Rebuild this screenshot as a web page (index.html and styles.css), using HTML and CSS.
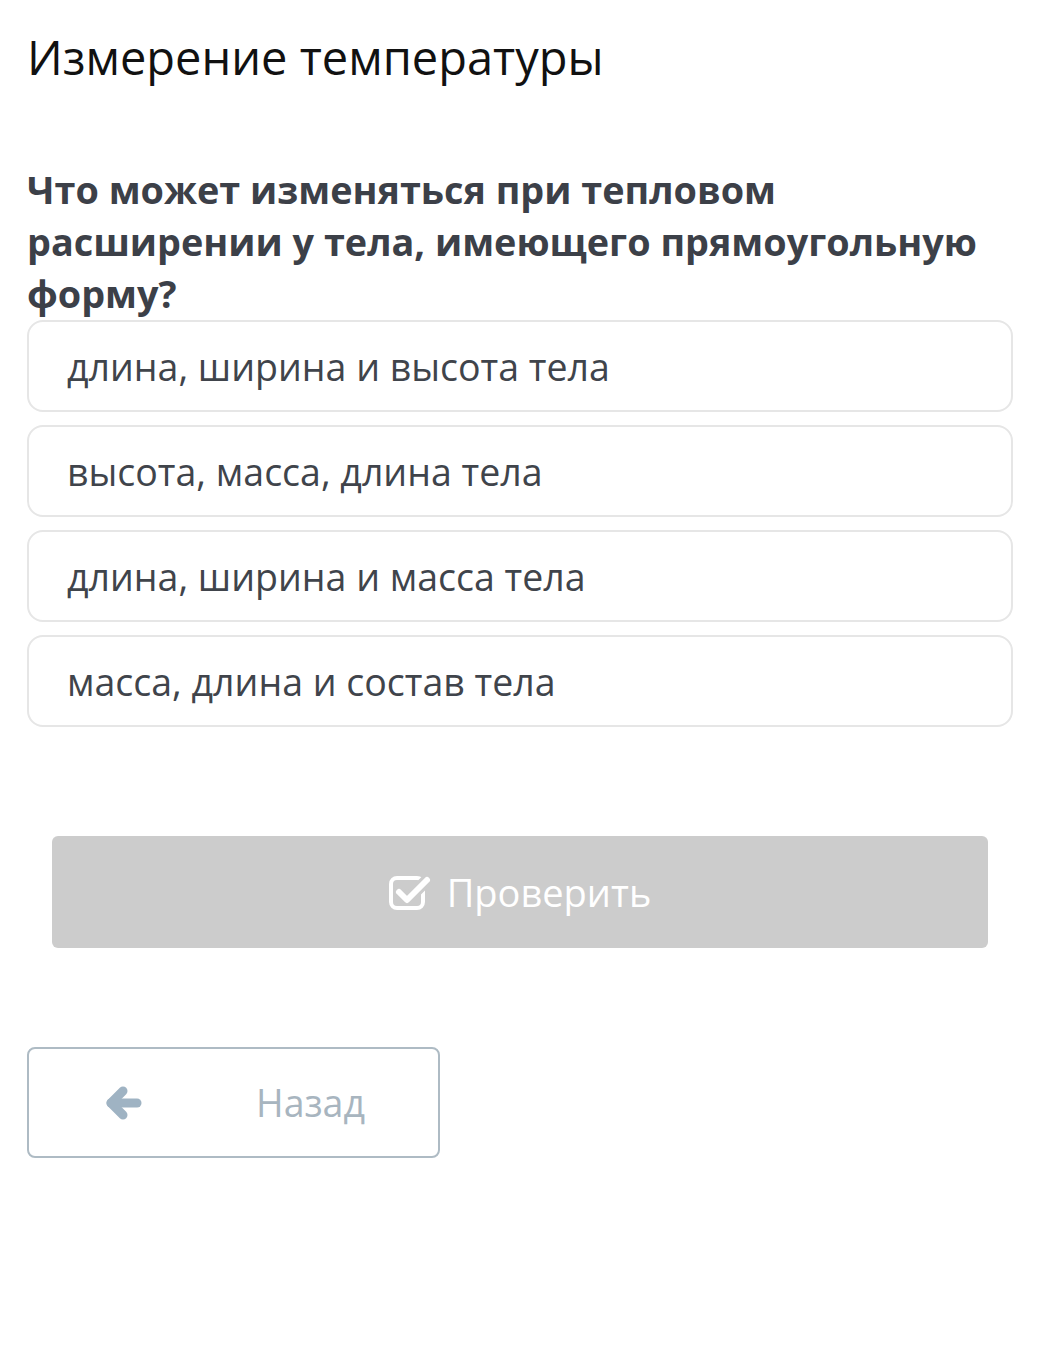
FILE: index.html
```html
<!DOCTYPE html>
<html lang="ru">
  <head>
    <meta charset="UTF-8" />
    <title>Измерение температуры</title>
    <link rel="stylesheet" href="styles.css">
  </head>
  <body>
    <div class="page">
      <h1 class="title">Измерение температуры</h1>

      <div class="question">
        Что может изменяться при тепловом расширении у тела, имеющего прямоугольную форму?
      </div>

      <!-- Варианты ответа -->
      <div class="options">
        <div class="option">длина, ширина и высота тела</div>
        <div class="option">высота, масса, длина тела</div>
        <div class="option">длина, ширина и масса тела</div>
        <div class="option">масса, длина и состав тела</div>
      </div>

      <button class="check-btn" disabled>
        <svg class="check-icon" viewBox="0 0 44 38" width="44" height="38">
          <rect x="2" y="5" width="32" height="30" rx="6" fill="none" stroke="#fff" stroke-width="4" />
          <polyline points="10,19 18,27 38,7" fill="none" stroke="#cccccc" stroke-width="12" stroke-linecap="round" stroke-linejoin="round" />
          <polyline points="10,19 18,27 38,7" fill="none" stroke="#fff" stroke-width="6" stroke-linecap="round" stroke-linejoin="round" />
        </svg>
        <span>Проверить</span>
      </button>

      <button class="back-btn">
        <svg class="back-icon" viewBox="0 0 36 34" width="36" height="34">
          <g fill="none" stroke="#9fb3c3" stroke-width="9" stroke-linecap="round" stroke-linejoin="round">
            <polyline points="17,5 5,17 17,29" />
            <line x1="5" y1="17" x2="31" y2="17" />
          </g>
        </svg>
        <span>Назад</span>
      </button>
    </div>
  </body>
</html>
```

FILE: styles.css
```css
body {
  margin: 0;
  font-family: "Open Sans", "Noto Sans", sans-serif;
  background: #fff;
}

.page {
  padding: 22px 46px 0 27px;
}

.title {
  margin: 0;
  font-size: 47px;
  font-weight: 400;
  line-height: 70px;
  color: #111;
}

.question {
  margin-top: 72px;
  font-size: 37.8px;
  font-weight: 700;
  line-height: 52px;
  color: #3c4048;
}

.options {
  display: flex;
  flex-direction: column;
  gap: 13px;
}

.option {
  display: flex;
  align-items: center;
  height: 92px;
  box-sizing: border-box;
  padding-left: 38px;
  border: 2px solid #e6e6e6;
  border-radius: 16px;
  font-size: 37.5px;
  color: #40444b;
}

.check-btn {
  display: flex;
  align-items: center;
  justify-content: center;
  gap: 14px;
  width: 936px;
  height: 112px;
  margin: 109px 0 0 25px;
  border: none;
  border-radius: 6px;
  background: #cccccc;
  color: #fff;
  font-family: inherit;
  font-size: 38px;
}

.back-btn {
  display: flex;
  align-items: center;
  gap: 114px;
  width: 413px;
  height: 111px;
  margin-top: 99px;
  padding: 0 0 0 77px;
  box-sizing: border-box;
  border: 2px solid #aebbc4;
  border-radius: 8px;
  background: #fff;
  color: #a8b5bf;
  font-family: inherit;
  font-size: 37.5px;
}
```
